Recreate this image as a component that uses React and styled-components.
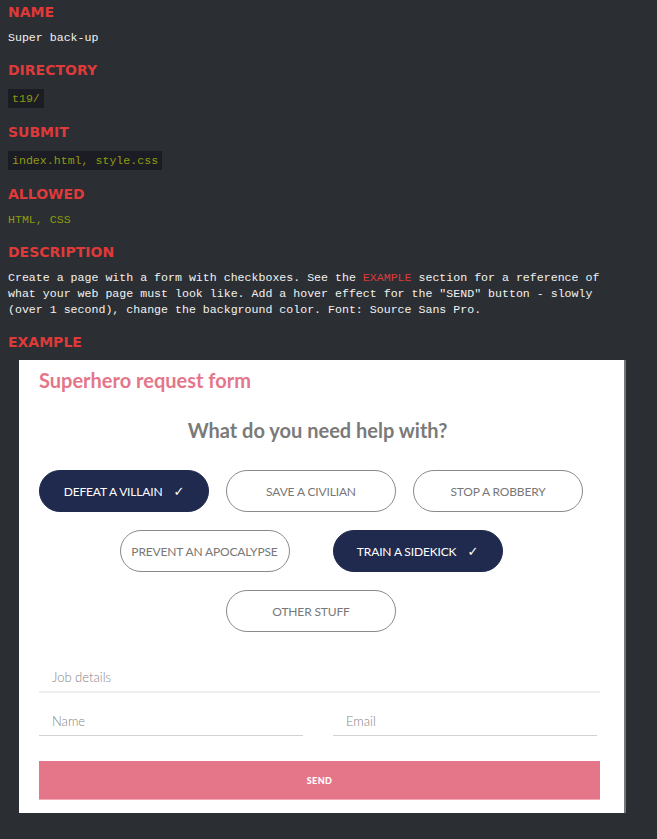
import React from "react"
import styled, { createGlobalStyle } from "styled-components"

const GlobalStyle = createGlobalStyle`
    html, body {
        margin: 0;
        padding: 0;
        background: #2b2e32;
    }
    * {
        box-sizing: border-box;
    }
`

const options = [
    [
        { label: "Defeat a villain", checked: true },
        { label: "Save a civilian" },
        { label: "Stop a robbery" },
    ],
    [
        { label: "Prevent an apocalypse" },
        { label: "Train a sidekick", checked: true },
    ],
    [
        { label: "Other stuff" },
    ],
]

export default function App() {
    return (
        <Page>
            <GlobalStyle />
            <Title $first>Name</Title>
            <Text>Super back-up</Text>

            <Title>Directory</Title>
            <Code>t19/</Code>

            <Title>Submit</Title>
            <Code>index.html, style.css</Code>

            <Title>Allowed</Title>
            <Text $green>HTML, CSS</Text>

            <Title>Description</Title>
            <Text>
                Create a page with a form with checkboxes. See the <Hl>EXAMPLE</Hl> section for a reference of
                <br />what your web page must look like. Add a hover effect for the "SEND" button - slowly
                <br />(over 1 second), change the background color. Font: Source Sans Pro.
            </Text>

            <Title>Example</Title>
            <Example>
                <FormTitle>Superhero request form</FormTitle>
                <Question>What do you need help with?</Question>
                <Options>
                    {options.map((row, i) => (
                        <OptionRow key={i} $wide={row.length === 2}>
                            {row.map(o => (
                                <Pill key={o.label} type="button" $checked={o.checked}>
                                    {o.label}
                                    {o.checked && <Check>✓</Check>}
                                </Pill>
                            ))}
                        </OptionRow>
                    ))}
                </Options>
                <Field $job placeholder="Job details" />
                <FieldRow>
                    <Field placeholder="Name" />
                    <Field placeholder="Email" />
                </FieldRow>
                <Send type="button">Send</Send>
            </Example>
        </Page>
    )
}

const Page = styled.div`
    padding: 0 8px 40px;
    font-family: "Liberation Mono", "Courier New", monospace;
`

const Title = styled.h2`
    margin: ${props => props.$first ? '2px' : '14px'} 0 0;
    font-family: "DejaVu Sans", sans-serif;
    font-weight: 700;
    font-size: 14px;
    line-height: 20px;
    text-transform: uppercase;
    color: #df3a3a;
`

const Text = styled.p`
    margin: 8px 0 0;
    font-size: 11.6px;
    line-height: 16px;
    color: ${props => props.$green ? '#8c9c10' : '#f2f2f2'};
`

const Hl = styled.span`
    color: #df3a3a;
`

const Code = styled.div`
    display: table;
    margin-top: 9px;
    padding: 2px 4px;
    background: #1c1d24;
    color: #8c9c10;
    font-size: 11.6px;
    line-height: 15px;
`

const Example = styled.div`
    width: 607px;
    margin: 8px 0 0 11px;
    padding: 8px 24px 13px 20px;
    background: #fff;
    border-right: 2px solid #777;
    font-family: Lato, "Open Sans", sans-serif;
`

const FormTitle = styled.h1`
    margin: 0;
    font-size: 20px;
    line-height: 24px;
    font-weight: 700;
    color: #e5768a;
`

const Question = styled.h3`
    margin: 26px 0 0;
    font-size: 20px;
    line-height: 24px;
    font-weight: 700;
    color: #7a7a7a;
    text-align: center;
    padding-right: 4px;
`

const Options = styled.div`
    width: 544px;
    margin-top: 28px;
    display: flex;
    flex-direction: column;
    gap: 18px;
`

const OptionRow = styled.div`
    display: flex;
    justify-content: center;
    gap: ${props => props.$wide ? '43px' : '17px'};
`

const Pill = styled.button`
    width: 170px;
    height: 42px;
    border-radius: 21px;
    border: 1px solid ${props => props.$checked ? '#1f2a4e' : '#8a8a8a'};
    background: ${props => props.$checked ? '#1f2a4e' : '#fff'};
    color: ${props => props.$checked ? '#fff' : '#777'};
    font-family: Lato, "Open Sans", sans-serif;
    font-size: 12px;
    letter-spacing: -0.15px;
    text-transform: uppercase;
    display: flex;
    align-items: center;
    justify-content: center;
    padding: 0;
    cursor: pointer;
`

const Check = styled.span`
    margin-left: 11px;
    font-family: "DejaVu Sans", sans-serif;
    font-size: 13px;
`

const Field = styled.input`
    display: block;
    width: 100%;
    height: ${props => props.$job ? '30px' : '29px'};
    margin-top: ${props => props.$job ? '31px' : '0'};
    padding: 0 13px;
    border: none;
    border-bottom: ${props => props.$job ? '2px solid #eeeeee' : '1px solid #d2d2d2'};
    outline: none;
    font-family: Lato, "Open Sans", sans-serif;
    font-weight: 300;
    font-size: 13px;
    color: #555;

    &::placeholder {
        color: #858585;
    }
`

const FieldRow = styled.div`
    display: grid;
    grid-template-columns: 264px 264px;
    gap: 30px;
    margin-top: 14px;
`

const Send = styled.button`
    display: block;
    width: 100%;
    height: 39px;
    margin-top: 25px;
    border: none;
    border-bottom: 1px solid #f2a9b6;
    background: #e5768a;
    color: #fff;
    font-family: Lato, "Open Sans", sans-serif;
    font-weight: 900;
    font-size: 9px;
    letter-spacing: 0.4px;
    text-transform: uppercase;
    cursor: pointer;
    transition: background-color 1s;

    &:hover {
        background: #1f2a4e;
    }
`
